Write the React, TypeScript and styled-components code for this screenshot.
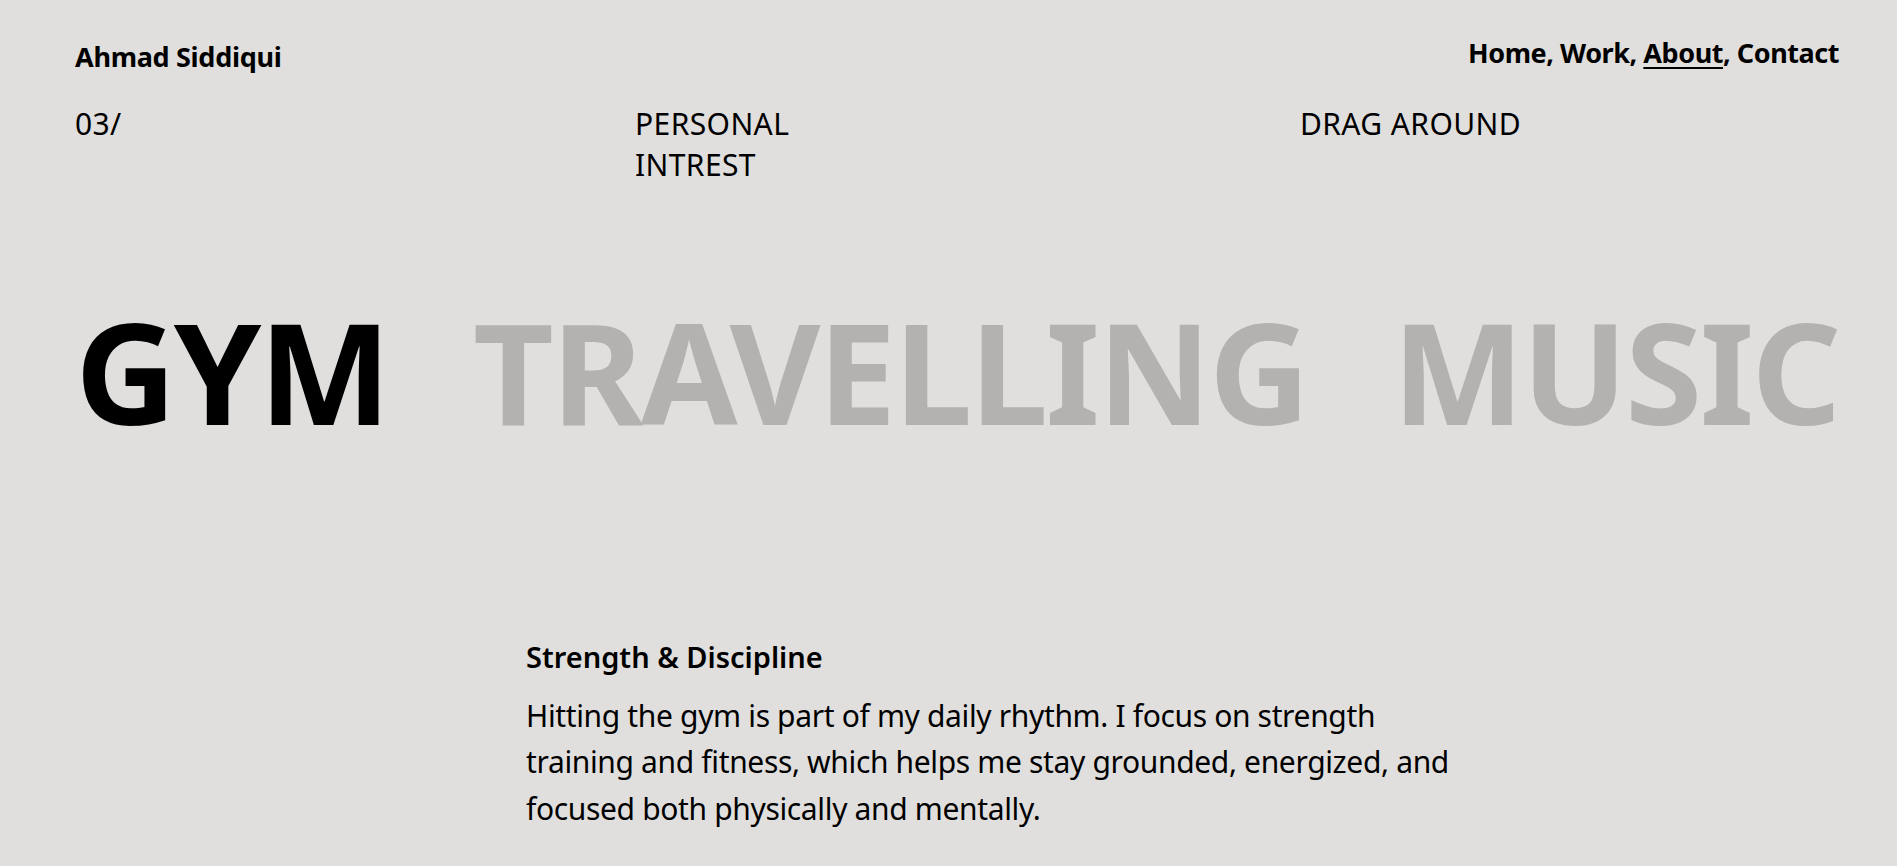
import React from "react";
import styled, { createGlobalStyle } from "styled-components";

const GlobalStyle = createGlobalStyle`
  html, body {
    margin: 0;
    padding: 0;
    background: #e0dfdd;
  }
  body {
    font-family: "Noto Sans", "Open Sans", sans-serif;
    color: #000;
    overflow: hidden;
  }
  * { box-sizing: border-box; }
`;

const Page = styled.div`
  min-height: 866px;
  padding: 39px 58px 0 75px;
  display: flex;
  flex-direction: column;
`;

const Header = styled.header`
  display: flex;
  justify-content: space-between;
  align-items: flex-start;
`;

const Name = styled.div`
  font-size: 27px;
  font-weight: 700;
  line-height: 34px;
  letter-spacing: -0.3px;
  margin-top: 1px;
`;

const Nav = styled.nav`
  font-size: 27px;
  font-weight: 700;
  line-height: 1.2;
  letter-spacing: -0.45px;
  margin-top: -2px;
`;

const NavLink = styled.a<{ $active?: boolean }>`
  color: #000;
  text-decoration: ${(p) => (p.$active ? "underline" : "none")};
  text-decoration-thickness: 2px;
  text-underline-offset: 4px;
`;

const Meta = styled.div`
  display: grid;
  grid-template-columns: 560px 665px 1fr;
  margin-top: 29px;
  font-size: 30px;
  line-height: 41px;
  letter-spacing: 0.4px;
`;

const MetaCell = styled.div`
  text-transform: uppercase;
`;

const Words = styled.div`
  display: flex;
  justify-content: space-between;
  margin-top: 116px;
`;

const Word = styled.span<{ $active?: boolean }>`
  font-size: 140px;
  font-weight: 700;
  line-height: 1;
  letter-spacing: -2.5px;
  color: ${(p) => (p.$active ? "#000" : "#b3b2b0")};
  cursor: grab;
  user-select: none;
`;

const Detail = styled.section`
  margin-top: 197px;
  padding-left: 451px;
`;

const DetailTitle = styled.h3`
  margin: 0;
  font-size: 29px;
  font-weight: 600;
  line-height: 1.3;
`;

const DetailText = styled.p`
  margin: 17px 0 0;
  max-width: 960px;
  font-size: 30px;
  letter-spacing: -0.35px;
  line-height: 46.5px;
`;

export default function App() {
  return (
    <>
      <GlobalStyle />
      <Page>
        <Header>
          <Name>Ahmad Siddiqui</Name>
          <Nav>
            <NavLink href="#">Home</NavLink>, <NavLink href="#">Work</NavLink>,{" "}
            <NavLink href="#" $active>
              About
            </NavLink>
            , <NavLink href="#">Contact</NavLink>
          </Nav>
        </Header>
        <Meta>
          <MetaCell>03/</MetaCell>
          <MetaCell>
            Personal
            <br />
            Intrest
          </MetaCell>
          <MetaCell>Drag around</MetaCell>
        </Meta>
        <Words>
          <Word $active>GYM</Word>
          <Word>TRAVELLING</Word>
          <Word>MUSIC</Word>
        </Words>
        <Detail>
          <DetailTitle>Strength &amp; Discipline</DetailTitle>
          <DetailText>
            Hitting the gym is part of my daily rhythm. I focus on strength training and fitness,
            which helps me stay grounded, energized, and focused both physically and mentally.
          </DetailText>
        </Detail>
      </Page>
    </>
  );
}
